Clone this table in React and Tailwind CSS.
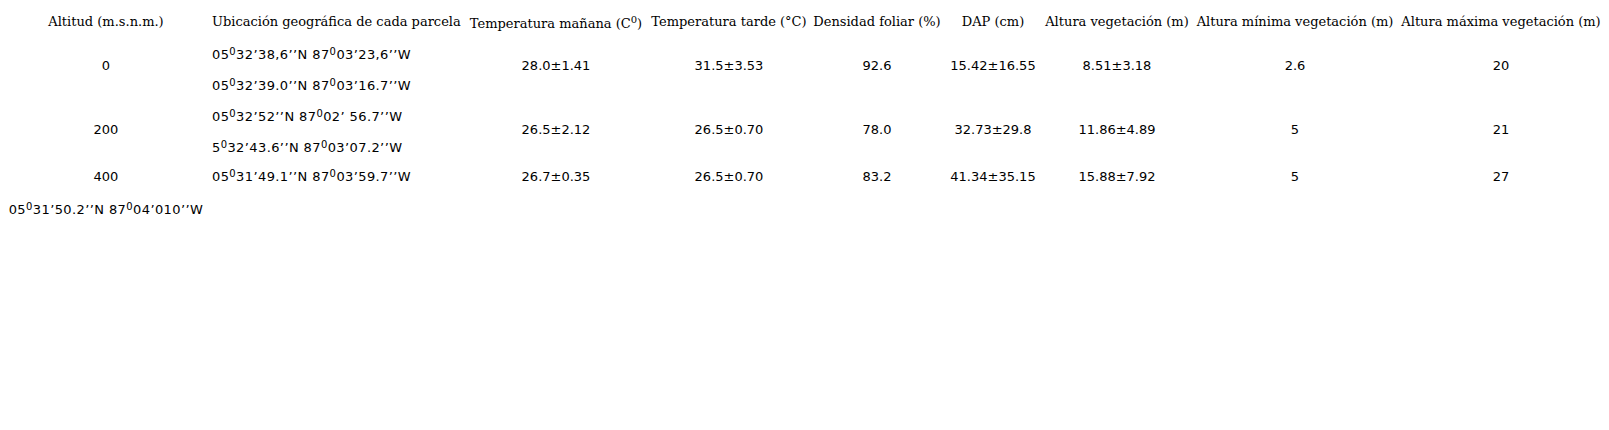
const head = "font-['DejaVu_Serif',serif] text-[13px] font-normal text-black whitespace-nowrap p-0";
const cell = "font-['DejaVu_Sans',sans-serif] text-[13px] text-black text-center align-middle p-0";

const Deg = () => <sup className="text-[10px] top-[-0.45em]">0</sup>;

const Coord = ({ a, b, c, d, lh }) => (
  <div className={`${lh} whitespace-nowrap tracking-[0.4px]`}>
    {a}
    <Deg />
    {b} {c}
    <Deg />
    {d}
  </div>
);

const rows = [
  {
    alt: "0",
    h: "h-[63px]",
    pb: "pb-[6px]",
    pt: "pt-[2px]",
    lh: "leading-[31px]",
    coords: [
      ["05", "32’38,6’’N", "87", "03’23,6’’W"],
      ["05", "32’39.0’’N", "87", "03’16.7’’W"],
    ],
    vals: ["28.0±1.41", "31.5±3.53", "92.6", "15.42±16.55", "8.51±3.18", "2.6", "20"],
  },
  {
    alt: "200",
    h: "h-[62px]",
    pb: "pb-[4px]",
    pt: "pt-0",
    lh: "leading-[31px]",
    coords: [
      ["05", "32’52’’N", "87", "02’ 56.7’’W"],
      ["5", "32’43.6’’N", "87", "03’07.2’’W"],
    ],
    vals: ["26.5±2.12", "26.5±0.70", "78.0", "32.73±29.8", "11.86±4.89", "5", "21"],
  },
  {
    alt: "400",
    h: "h-[28px]",
    pb: "pb-0",
    pt: "pt-0",
    lh: "leading-[28px]",
    coords: [["05", "31’49.1’’N", "87", "03’59.7’’W"]],
    vals: ["26.7±0.35", "26.5±0.70", "83.2", "41.34±35.15", "15.88±7.92", "5", "27"],
  },
];

export default function App() {
  return (
    <div className="w-[1609px] h-[430px] bg-white overflow-hidden">
      <table className="table-fixed border-collapse w-[1602px]">
        <colgroup>
          <col className="w-[212px]" />
          <col className="w-[254px]" />
          <col className="w-[180px]" />
          <col className="w-[166px]" />
          <col className="w-[130px]" />
          <col className="w-[102px]" />
          <col className="w-[146px]" />
          <col className="w-[210px]" />
          <col className="w-[202px]" />
        </colgroup>
        <thead>
          <tr className="h-[37px]">
            <th className={`${head} text-center pt-[6px]`}>Altitud (m.s.n.m.)</th>
            <th className={`${head} text-left pt-[6px]`}>Ubicación geográfica de cada parcela</th>
            <th className={`${head} text-center pt-[10px]`}>
              Temperatura mañana (C<sup className="text-[10px]">0</sup>)
            </th>
            <th className={`${head} text-center pt-[6px]`}>Temperatura tarde (°C)</th>
            <th className={`${head} text-center pt-[6px]`}>Densidad foliar (%)</th>
            <th className={`${head} text-center pt-[6px]`}>DAP (cm)</th>
            <th className={`${head} text-center pt-[6px]`}>Altura vegetación (m)</th>
            <th className={`${head} text-center pt-[6px]`}>Altura mínima vegetación (m)</th>
            <th className={`${head} text-center pt-[6px]`}>Altura máxima vegetación (m)</th>
          </tr>
        </thead>
        <tbody>
          {rows.map((r) => (
            <tr key={r.alt} className={r.h}>
              <td className={`${cell} ${r.pb}`}>{r.alt}</td>
              <td className={`font-['DejaVu_Sans',sans-serif] text-[13px] text-black text-left align-top p-0 ${r.pt}`}>
                {r.coords.map((c, i) => (
                  <Coord key={i} a={c[0]} b={c[1]} c={c[2]} d={c[3]} lh={r.lh} />
                ))}
              </td>
              {r.vals.map((v, i) => (
                <td key={i} className={`${cell} ${r.pb}`}>
                  {v}
                </td>
              ))}
            </tr>
          ))}
          <tr className="h-[38px]">
            <td className={`${cell} whitespace-nowrap tracking-[0.4px]`}>
              05<Deg />31’50.2’’N 87<Deg />04’010’’W
            </td>
            <td colSpan={8}></td>
          </tr>
        </tbody>
      </table>
    </div>
  );
}
